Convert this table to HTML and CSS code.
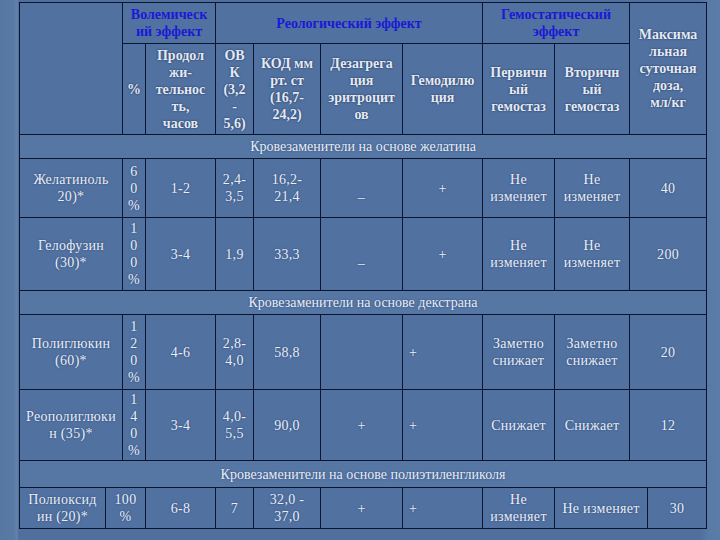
FILE: index.html
```html
<!DOCTYPE html>
<html lang="ru">
<head>
<meta charset="utf-8">
<title>Кровезаменители</title>
<link rel="stylesheet" href="styles.css">
</head>
<body>
<div class="slide">
<table class="grid">
<colgroup>
<col class="c1"><col class="c2"><col class="c3"><col class="c4"><col class="c5"><col class="c6">
<col class="c7"><col class="c8"><col class="c9"><col class="c10"><col class="c11"><col class="c12">
</colgroup>
<tr class="h1">
<td colspan="2" rowspan="2"></td>
<td colspan="2" class="grp">Волемическ<br>ий эффект</td>
<td colspan="4" class="grp">Реологический эффект</td>
<td colspan="2" class="grp">Гемостатический<br>эффект</td>
<td colspan="2" rowspan="2" class="sub">Максима<br>льная<br>суточная<br>доза,<br>мл/кг</td>
</tr>
<tr class="h2">
<td class="sub">%</td>
<td class="sub">Продол<br>жи-<br>тельнос<br>ть,<br>часов</td>
<td class="sub">ОВ<br>К<br>(3,2<br>-<br>5,6)</td>
<td class="sub">КОД мм<br>рт. ст<br>(16,7-<br>24,2)</td>
<td class="sub">Дезагрега<br>ция<br>эритроцит<br>ов</td>
<td class="sub">Гемодилю<br>ция</td>
<td class="sub">Первичн<br>ый<br>гемостаз</td>
<td class="sub">Вторичн<br>ый<br>гемостаз</td>
</tr>
<tr class="sec s1"><td colspan="12">Кровезаменители на основе желатина</td></tr>
<tr class="r1">
<td colspan="2">Желатиноль<br>20)*</td>
<td class="pct">6<br>0<br>%</td>
<td>1-2</td>
<td>2,4-<br>3,5</td>
<td>16,2-<br>21,4</td>
<td class="low">–</td>
<td>+</td>
<td>Не<br>изменяет</td>
<td>Не<br>изменяет</td>
<td colspan="2">40</td>
</tr>
<tr class="r2">
<td colspan="2">Гелофузин<br>(30)*</td>
<td class="pct">1<br>0<br>0<br>%</td>
<td>3-4</td>
<td>1,9</td>
<td>33,3</td>
<td class="low">–</td>
<td>+</td>
<td>Не<br>изменяет</td>
<td>Не<br>изменяет</td>
<td colspan="2">200</td>
</tr>
<tr class="sec s2"><td colspan="12">Кровезаменители на основе декстрана</td></tr>
<tr class="r3">
<td colspan="2">Полиглюкин<br>(60)*</td>
<td class="pct">1<br>2<br>0<br>%</td>
<td>4-6</td>
<td>2,8-<br>4,0</td>
<td>58,8</td>
<td></td>
<td class="lft">+</td>
<td>Заметно<br>снижает</td>
<td>Заметно<br>снижает</td>
<td colspan="2">20</td>
</tr>
<tr class="r4">
<td colspan="2">Реополиглюки<br>н (35)*</td>
<td class="pct">1<br>4<br>0<br>%</td>
<td>3-4</td>
<td>4,0-<br>5,5</td>
<td>90,0</td>
<td>+</td>
<td class="lft">+</td>
<td>Снижает</td>
<td>Снижает</td>
<td colspan="2">12</td>
</tr>
<tr class="sec s3"><td colspan="12">Кровезаменители на основе полиэтиленгликоля</td></tr>
<tr class="r5">
<td>Полиоксид<br>ин (20)*</td>
<td colspan="2">100<br>%</td>
<td>6-8</td>
<td>7</td>
<td>32,0 -<br>37,0</td>
<td>+</td>
<td class="lft">+</td>
<td>Не<br>изменяет</td>
<td colspan="2">Не изменяет</td>
<td>30</td>
</tr>
</table>
</div>
</body>
</html>
```
FILE: styles.css
```css
html, body {
  margin: 0;
  padding: 0;
}
body {
  width: 720px;
  height: 540px;
  overflow: hidden;
  background:
    linear-gradient(90deg, #5777a3 0px, #5a7aa6 14px, #6482ad 17px, #4f6f9c 19px, #4f6f9c 700px, #587aa6 708px, #5b7ca8 720px),
    #4f6f9c;
  font-family: "Liberation Serif", "Times New Roman", serif;
  color: #e8eef8;
}
.slide {
  padding: 2px 0 0 19px;
}
.grid {
  border-collapse: collapse;
  table-layout: fixed;
  width: 687px;
  font-size: 14px;
  line-height: 17px;
  background: #5171a0;
}
.c1 { width: 86px; }
.c2 { width: 17px; }
.c3 { width: 23px; }
.c4 { width: 70px; }
.c5 { width: 38px; }
.c6 { width: 67px; }
.c7 { width: 82px; }
.c8 { width: 80px; }
.c9 { width: 72px; }
.c10 { width: 75px; }
.c11 { width: 18px; }
.c12 { width: 59px; }
.grid td {
  border: 1px solid #0a1630;
  padding: 0;
  text-align: center;
  vertical-align: middle;
  letter-spacing: 0.3px;
  text-shadow: 0 0 2px rgba(20, 40, 80, 0.6);
  overflow: hidden;
  white-space: nowrap;
}
.h1 { height: 41px; }
.h2 { height: 91px; }
.grid td.grp {
  color: #1a1ad6;
  font-weight: bold;
  letter-spacing: 0;
  text-shadow: none;
}
.grid td.sub {
  font-weight: bold;
  letter-spacing: 0;
  color: #e4eaf4;
  text-shadow: 0 0 2px rgba(10, 25, 60, 0.8);
}
.grid .sec td {
  letter-spacing: 0;
  background: #5676a4;
}
.s1 { height: 24px; }
.s2 { height: 24px; }
.s3 { height: 27px; }
.r1 { height: 59px; }
.r2 { height: 73px; }
.r3 { height: 75px; }
.r4 { height: 71px; }
.r5 { height: 41px; }
.pct {
  line-height: 17px;
}
.grid td.low {
  padding-top: 18px;
}
.grid td.lft {
  text-align: left;
  padding-left: 6px;
}
```
